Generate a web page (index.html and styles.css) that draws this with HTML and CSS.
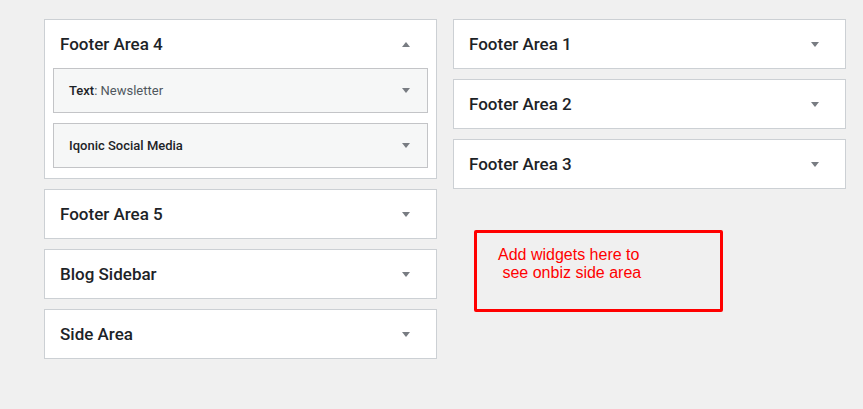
FILE: index.html
```html
<!DOCTYPE html>
<html lang="en">
<head>
  <meta charset="UTF-8">
  <title>Widgets</title>
  <link rel="stylesheet" href="styles.css">
</head>
<body>
  <div class="widgets-wrap">
    <div class="widget-col">
      <div class="sidebar open">
        <div class="sidebar-name">
          <h2>Footer Area 4</h2>
          <span class="arrow up"></span>
        </div>
        <div class="widget-list">
          <div class="widget">
            <h3>Text<span class="in-title">: Newsletter</span></h3>
            <span class="arrow"></span>
          </div>
          <div class="widget">
            <h3>Iqonic Social Media</h3>
            <span class="arrow"></span>
          </div>
        </div>
      </div>
      <div class="sidebar">
        <div class="sidebar-name">
          <h2>Footer Area 5</h2>
          <span class="arrow"></span>
        </div>
      </div>
      <div class="sidebar">
        <div class="sidebar-name">
          <h2>Blog Sidebar</h2>
          <span class="arrow"></span>
        </div>
      </div>
      <div class="sidebar">
        <div class="sidebar-name">
          <h2>Side Area</h2>
          <span class="arrow"></span>
        </div>
      </div>
    </div>

    <div class="widget-col">
      <div class="sidebar">
        <div class="sidebar-name">
          <h2>Footer Area 1</h2>
          <span class="arrow"></span>
        </div>
      </div>
      <div class="sidebar">
        <div class="sidebar-name">
          <h2>Footer Area 2</h2>
          <span class="arrow"></span>
        </div>
      </div>
      <div class="sidebar">
        <div class="sidebar-name">
          <h2>Footer Area 3</h2>
          <span class="arrow"></span>
        </div>
      </div>
      <div class="note">
        Add widgets here to<br>
        &nbsp;see onbiz side area
      </div>
    </div>
  </div>
</body>
</html>
```

FILE: styles.css
```css
body {
  margin: 0;
  background-color: #f0f0f0;
  font-family: Roboto, 'Noto Sans', sans-serif;
  color: #1d2327;
}

.widgets-wrap {
  display: flex;
  gap: 16px;
  padding: 19px 0 0 44px;
}

.widget-col {
  width: 393px;
  display: flex;
  flex-direction: column;
  gap: 10px;
}

.sidebar {
  background-color: #fff;
  border: 1px solid #ccd0d4;
}

.sidebar-name {
  height: 48px;
  display: flex;
  align-items: center;
  justify-content: space-between;
  padding: 0 26px 0 15px;
}

.sidebar-name h2 {
  margin: 0;
  font-size: 17px;
  font-weight: 500;
  color: #1d2327;
}

.widget-list {
  display: flex;
  flex-direction: column;
  gap: 10px;
  padding: 0 8px 10px 8px;
}

.widget {
  height: 43px;
  background-color: #f6f7f7;
  border: 1px solid #c3c4c7;
  display: flex;
  align-items: center;
  justify-content: space-between;
  padding: 0 17px 0 15px;
}

.widget h3 {
  margin: 0;
  font-size: 13px;
  font-weight: 500;
  color: #1d2327;
}

.in-title {
  font-weight: 400;
  color: #50575e;
}

.arrow {
  width: 0;
  height: 0;
  border-left: 4px solid transparent;
  border-right: 4px solid transparent;
  border-top: 5px solid #787c82;
}

.arrow.up {
  border-top: none;
  border-bottom: 5px solid #787c82;
}

.note {
  margin: 31px 0 0 21px;
  border: 3px solid #ff0000;
  border-radius: 2px;
  padding: 13px 0 0 21px;
  width: 222px;
  height: 63px;
  font-family: 'Liberation Sans', Arial, sans-serif;
  font-size: 16px;
  line-height: 18px;
  color: #ff0000;
}
```
